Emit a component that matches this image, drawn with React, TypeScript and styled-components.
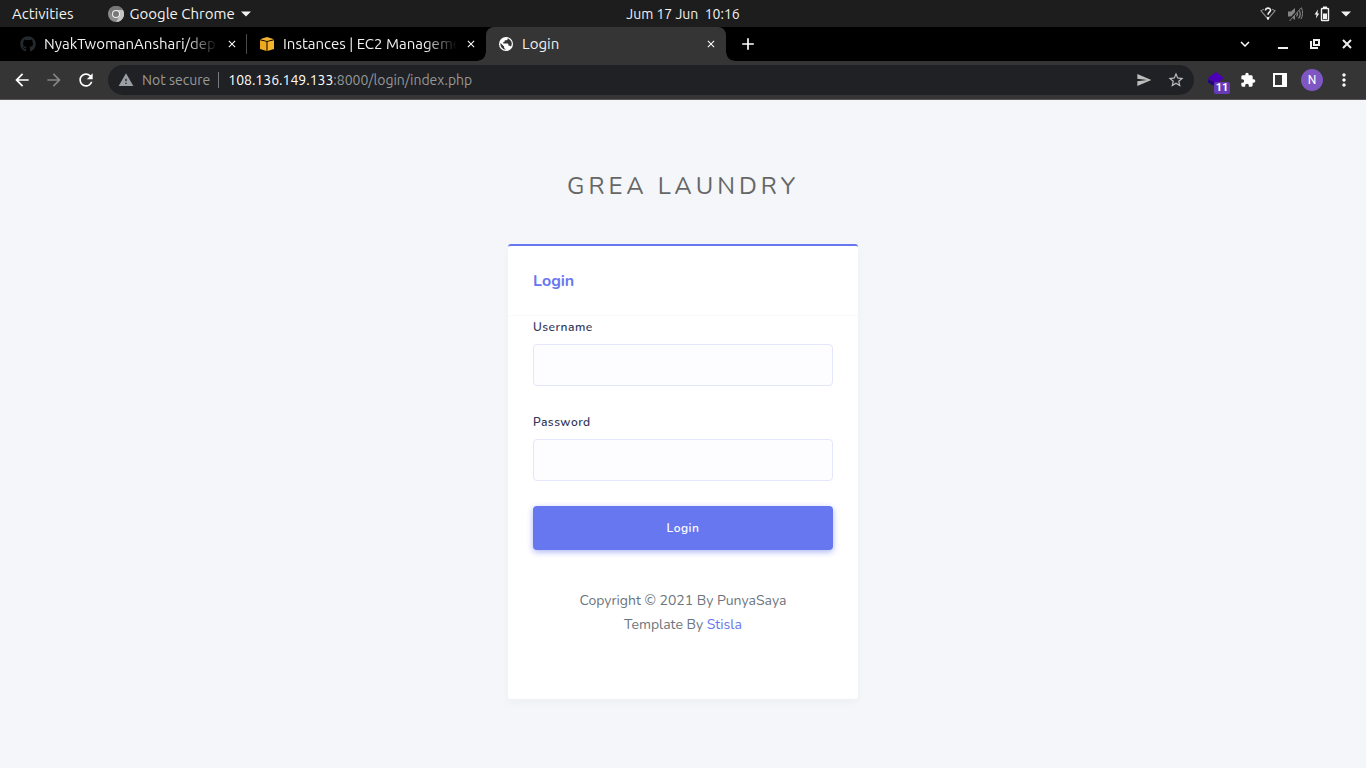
import React from "react";
import styled, { createGlobalStyle, css } from "styled-components";
import {
  MdAdd,
  MdArrowBack,
  MdArrowForward,
  MdClose,
  MdExtension,
  MdKeyboardArrowDown,
  MdMoreVert,
  MdRefresh,
  MdSend,
  MdStarBorder,
  MdWarning,
} from "react-icons/md";
import { FaGithub } from "react-icons/fa";

const GlobalStyle = createGlobalStyle`
  *, *::before, *::after { box-sizing: border-box; }
  body { margin: 0; background: #f4f6f9; }
  button, input { font: inherit; }
`;

const uiFont = `Ubuntu, "Noto Sans", "Open Sans", sans-serif`;
const pageFont = `Nunito, "Open Sans", "Noto Sans", sans-serif`;

const Screen = styled.div`
  display: flex;
  flex-direction: column;
  min-height: 100vh;
  font-family: ${uiFont};
  font-size: 14px;
  line-height: 20px;
`;

const SystemBar = styled.header`
  display: grid;
  grid-template-columns: 1fr auto 1fr;
  align-items: center;
  height: 27px;
  padding: 0 12px;
  background: #1d1d1d;
  color: #f2f2f2;
`;

const SystemGroup = styled.div<{ $end?: boolean }>`
  display: flex;
  align-items: center;
  gap: ${(p) => (p.$end ? "11px" : "34px")};
  padding-right: ${(p) => (p.$end ? "3px" : "0")};
  justify-content: ${(p) => (p.$end ? "flex-end" : "flex-start")};
`;

const plainButton = css`
  display: inline-flex;
  align-items: center;
  justify-content: center;
  padding: 0;
  border: 0;
  background: none;
  color: inherit;
`;

const SystemButton = styled.button`
  ${plainButton}
  gap: 6px;
  font-size: 15px;
  white-space: nowrap;
`;

const Clock = styled.time`
  white-space: pre;
`;

const TabStrip = styled.div`
  display: flex;
  height: 34px;
  padding-left: 8px;
  background: #000;
  color: #f1f1f1;
`;

const Tab = styled.div<{ $active?: boolean; $divided?: boolean }>`
  position: relative;
  display: flex;
  align-items: center;
  flex: 0 1 ${(p) => (p.$active ? "240px" : "239px")};
  min-width: 0;
  gap: 8px;
  padding: 0 9px 0 12px;
  ${(p) =>
    p.$active &&
    css`
      background: #353535;
      border-radius: 8px 8px 0 0;
      &::before,
      &::after {
        content: "";
        position: absolute;
        bottom: 0;
        width: 8px;
        height: 8px;
      }
      &::before {
        right: 100%;
        background: radial-gradient(circle at 0 0, transparent 7px, #353535 8px);
      }
      &::after {
        left: 100%;
        background: radial-gradient(circle at 100% 0, transparent 7px, #353535 8px);
      }
    `}
  ${(p) =>
    p.$divided &&
    css`
      &::after {
        content: "";
        position: absolute;
        right: 0;
        top: 7px;
        width: 1px;
        height: 20px;
        background: #4a4a4a;
      }
    `}
`;

const TabTitle = styled.span<{ $faded?: boolean }>`
  flex: 1;
  min-width: 0;
  font-size: 15px;
  white-space: nowrap;
  ${(p) =>
    p.$faded &&
    css`
      mask-image: linear-gradient(to right, #000 calc(100% - 32px), transparent);
    `}
`;

const IconButton = styled.button<{ $size: number; $dim?: boolean }>`
  ${plainButton}
  flex: none;
  width: ${(p) => p.$size}px;
  height: ${(p) => p.$size}px;
  color: ${(p) => (p.$dim ? "#858585" : "#fff")};
`;

const NewTab = styled(IconButton)`
  align-self: center;
  margin-left: 8px;
`;

const WindowControls = styled.div`
  display: flex;
  align-items: center;
  margin-left: auto;
  padding-right: 3px;
`;

const WindowGap = styled.span`
  width: 6px;
`;

const Toolbar = styled.div`
  display: flex;
  align-items: center;
  height: 39px;
  padding: 0 6px;
  background: #353535;
  border-bottom: 1px solid #5b5759;
`;

const AddressBar = styled.form`
  display: flex;
  align-items: center;
  flex: 1;
  min-width: 0;
  height: 30px;
  margin: 0 6px;
  padding: 0 2px 0 10px;
  border-radius: 15px;
  background: #202124;
  color: #9aa0a6;
`;

const Security = styled.button`
  ${plainButton}
  gap: 8px;
  padding-right: 8px;
  color: #9a9a9a;
  white-space: nowrap;
`;

const Address = styled.div`
  flex: 1;
  min-width: 0;
  padding-left: 9px;
  border-left: 1px solid #77797c;
  line-height: 16px;
  color: #969798;
  white-space: nowrap;
  overflow: hidden;
`;

const Host = styled.span`
  color: #fff;
`;

const Extension = styled(IconButton)`
  position: relative;
`;

const Badge = styled.span`
  position: absolute;
  left: 14px;
  top: 18px;
  width: 16px;
  border-radius: 2px;
  background: #673ab7;
  color: #fff;
  font: bold 11px/12px Roboto, sans-serif;
  text-align: center;
`;

const Avatar = styled.span`
  width: 22px;
  height: 22px;
  border-radius: 50%;
  background: #7e57c2;
  color: #fff;
  font: 12px/22px Roboto, sans-serif;
  text-align: center;
`;

const Page = styled.main`
  flex: 1;
  display: flex;
  flex-direction: column;
  align-items: center;
  padding: 68px 16px;
  background: #f4f6f9;
  font-family: ${pageFont};
  color: #6c757d;
`;

const Brand = styled.h1`
  margin: 0 0 40px;
  font-size: 24px;
  font-weight: 400;
  line-height: 36px;
  letter-spacing: 4px;
  text-transform: uppercase;
  color: #666;
`;

const Card = styled.section`
  width: 100%;
  max-width: 350px;
  border-top: 2px solid #6777ef;
  border-radius: 3px;
  background: #fff;
  box-shadow: 0 4px 8px rgba(0, 0, 0, 0.03);
`;

const CardHeader = styled.div`
  padding: 21px 25px 20px;
  border-bottom: 1px solid #f9f9f9;
`;

const CardTitle = styled.h2`
  margin: 0;
  font-size: 16px;
  font-weight: 700;
  line-height: 28px;
  color: #6777ef;
`;

const LoginForm = styled.form`
  display: flex;
  flex-direction: column;
  gap: 25px;
  padding: 0 25px;
`;

const Field = styled.div`
  display: flex;
  flex-direction: column;
  gap: 8px;
  padding-top: 2px;
`;

const Label = styled.label`
  font-size: 12px;
  font-weight: 600;
  line-height: 18px;
  letter-spacing: 0.5px;
  color: #34395e;
`;

const Input = styled.input`
  width: 100%;
  height: 42px;
  padding: 10px 15px;
  border: 1px solid #e4e6fc;
  border-radius: 4px;
  background: #fdfdff;
  outline: none;
`;

const Submit = styled.button`
  height: 44px;
  border: 0;
  border-radius: 4px;
  background: #6777ef;
  box-shadow: 0 2px 6px #acb5f6;
  color: #fff;
  font-size: 12px;
  font-weight: 600;
  letter-spacing: 0.5px;
`;

const Credits = styled.footer`
  padding: 39px 25px 62px;
  text-align: center;
  font-size: 14px;
  line-height: 24px;

  p {
    margin: 0;
  }
  a {
    color: #6777ef;
    text-decoration: none;
  }
`;

const ChromeMark = () => (
  <svg width="16" height="16" viewBox="0 0 16 16" aria-hidden="true">
    <circle cx="8" cy="8" r="8" fill="#8b8b8b" />
    <path d="M8 4h7a8 8 0 0 1-7 12l3.500-6z" fill="#c4c4c4" />
    <path d="M1 4a8 8 0 0 1 14 0H8L4.500 10z" fill="#777" />
    <circle cx="8" cy="8" r="4" fill="#f1f1f1" />
    <circle cx="8" cy="8" r="3" fill="#777" />
  </svg>
);

const Caret = () => (
  <svg width="10" height="6" viewBox="0 0 10 6" aria-hidden="true">
    <path d="M0 .5h10L5 5.500z" fill="#f2f2f2" />
  </svg>
);

const WifiUnknown = () => (
  <svg width="16" height="16" viewBox="0 0 16 16" fill="none" aria-hidden="true">
    <path d="M4 3.200Q2.500 3.700 1 4.800L8 13l7-8.200Q13.500 3.700 12 3.200" stroke="#8a8a8a" strokeWidth="1.200" />
    <path d="M5.500 4.500C5.500 1.200 10.800 1.400 10.500 4.500 10.300 6.300 8 6.200 8 8.800" stroke="#f2f2f2" strokeWidth="1.600" />
    <rect x="7" y="11" width="2" height="2.500" fill="#f2f2f2" />
  </svg>
);

const VolumeMuted = () => (
  <svg width="16" height="16" viewBox="0 0 16 16" fill="none" stroke="#858585" aria-hidden="true">
    <path d="M1 5.500h3L8 2v12l-4-3.500H1z" fill="#858585" stroke="none" />
    <path d="M9.500 5.500q2 2.500 0 5M11.500 3.500q3.500 4.500 0 9" strokeWidth="1.200" />
    <path d="M14.500 2C16 5 16 10 14 13" strokeWidth="1" />
    <path d="M1.500 15L14 1" stroke="#1d1d1d" strokeWidth="2" />
    <path d="M2.500 15L14.500 1.500" strokeWidth="1" />
  </svg>
);

const BatteryCharging = () => (
  <svg width="16" height="16" viewBox="0 0 16 16" aria-hidden="true">
    <path d="M4 3.500L.5 8.500h2L2 12.500l3.200-5H3.400z" fill="#f2f2f2" />
    <path d="M9 .5h4v2H9z" fill="#f2f2f2" />
    <rect x="7.500" y="2.500" width="7" height="12" rx=".5" fill="none" stroke="#f2f2f2" strokeWidth="1.400" />
    <path d="M9 7.500h4V13H9z" fill="#f2f2f2" />
  </svg>
);

const Globe = () => (
  <svg width="16" height="16" viewBox="0 0 16 16" aria-hidden="true">
    <circle cx="8" cy="8" r="7" fill="#fff" />
    <path
      d="M9.500 2.300c.4 1-.2 1.900-1.300 2H6.800v1.300L5.300 6v1.500h4.200c1 0 1 1.200 1 2.200h1.200c.6 0 1 .4 1.200.9A5.600 5.600 0 0 0 9.500 2.300zM2.500 7l3.600 3.600v.8c0 .8.600 1.300 1.300 1.300v1A5.700 5.700 0 0 1 2.500 7z"
      fill="#353535"
    />
  </svg>
);

const AwsCube = () => (
  <svg width="16" height="16" viewBox="0 0 16 16" aria-hidden="true">
    <path d="M1 3.200L8 1l7 2.200L8 5z" fill="#f5b335" />
    <path d="M1 4.300l6.500 1.400V15L1 13z" fill="#f0a91f" />
    <path d="M15 4.300L8.500 5.700V15l6.500-2z" fill="#f6b42c" />
  </svg>
);

const MinimizeIcon = () => (
  <svg width="10" height="10" viewBox="0 0 10 10" aria-hidden="true">
    <path d="M0 8h10v2H0z" fill="#eee" />
  </svg>
);

const RestoreIcon = () => (
  <svg width="10" height="10" viewBox="0 0 10 10" fill="none" stroke="#eee" strokeWidth="2" aria-hidden="true">
    <path d="M4 1h5v5H4z" />
    <path d="M1 2v7h7" />
  </svg>
);

const WindowClose = () => (
  <svg width="10" height="10" viewBox="0 0 10 10" fill="none" stroke="#eee" strokeWidth="2" aria-hidden="true">
    <path d="M1 1l8 8M9 1L1 9" />
  </svg>
);

const ExtensionMark = () => (
  <svg width="16" height="16" viewBox="0 0 16 16" aria-hidden="true">
    <path d="M0 7l8 4.500V15L0 10.500z" fill="#240580" />
    <path d="M8 0l8 6-8 6-8-6z" fill="#4b00b5" />
  </svg>
);

const SidePanel = () => (
  <svg width="14" height="14" viewBox="0 0 14 14" aria-hidden="true">
    <path d="M1 1h12v12H1z" fill="none" stroke="#fff" strokeWidth="2" />
    <path d="M9 1h4v12H9z" fill="#fff" />
  </svg>
);

interface BrowserTabProps {
  title: string;
  icon: React.ReactNode;
  active?: boolean;
  divided?: boolean;
}

const BrowserTab = ({ title, icon, active, divided }: BrowserTabProps) => (
  <Tab $active={active} $divided={divided} role="tab" aria-selected={!!active}>
    {icon}
    <TabTitle $faded={!active}>{title}</TabTitle>
    <IconButton $size={12} aria-label={`Close ${title}`}>
      <MdClose size={14} stroke="currentColor" />
    </IconButton>
  </Tab>
);

export default function App() {
  return (
    <Screen>
      <GlobalStyle />
      <SystemBar>
        <SystemGroup>
          <SystemButton>Activities</SystemButton>
          <SystemButton>
            <ChromeMark />
            Google Chrome
            <Caret />
          </SystemButton>
        </SystemGroup>
        <Clock>{"Jum 17 Jun  10:16"}</Clock>
        <SystemGroup $end>
          <WifiUnknown />
          <VolumeMuted />
          <BatteryCharging />
          <Caret />
        </SystemGroup>
      </SystemBar>

      <TabStrip role="tablist">
        <BrowserTab
          title="NyakTwomanAnshari/dep"
          icon={<FaGithub size={16} color="#24292e" />}
          divided
        />
        <BrowserTab title="Instances | EC2 Manageme" icon={<AwsCube />} />
        <BrowserTab title="Login" icon={<Globe />} active />
        <NewTab $size={28} aria-label="New tab">
          <MdAdd size={20} />
        </NewTab>
        <WindowControls>
          <IconButton $size={32} aria-label="Search tabs">
            <MdKeyboardArrowDown size={18} />
          </IconButton>
          <WindowGap />
          <IconButton $size={32} aria-label="Minimize">
            <MinimizeIcon />
          </IconButton>
          <IconButton $size={32} aria-label="Restore">
            <RestoreIcon />
          </IconButton>
          <IconButton $size={32} aria-label="Close window">
            <WindowClose />
          </IconButton>
        </WindowControls>
      </TabStrip>

      <Toolbar>
        <IconButton $size={32} aria-label="Back">
          <MdArrowBack size={20} />
        </IconButton>
        <IconButton $size={32} $dim aria-label="Forward">
          <MdArrowForward size={20} />
        </IconButton>
        <IconButton $size={32} aria-label="Reload">
          <MdRefresh size={20} />
        </IconButton>
        <AddressBar>
          <Security type="button">
            <MdWarning size={16} color="#9aa0a6" />
            Not secure
          </Security>
          <Address>
            <Host>108.136.149.133</Host>:8000/login/index.php
          </Address>
          <IconButton type="button" $size={32} aria-label="Share">
            <MdSend size={16} color="#bdbdbd" />
          </IconButton>
          <IconButton type="button" $size={32} aria-label="Bookmark">
            <MdStarBorder size={18} color="#bdbdbd" />
          </IconButton>
        </AddressBar>
        <Extension $size={32} aria-label="Extension, 11 items">
          <ExtensionMark />
          <Badge>11</Badge>
        </Extension>
        <IconButton $size={32} aria-label="Extensions">
          <MdExtension size={16} />
        </IconButton>
        <IconButton $size={32} aria-label="Side panel">
          <SidePanel />
        </IconButton>
        <IconButton $size={32} aria-label="Profile">
          <Avatar>N</Avatar>
        </IconButton>
        <IconButton $size={32} aria-label="Menu">
          <MdMoreVert size={20} />
        </IconButton>
      </Toolbar>

      <Page>
        <Brand>Grea Laundry</Brand>
        <Card>
          <CardHeader>
            <CardTitle>Login</CardTitle>
          </CardHeader>
          <LoginForm>
            <Field>
              <Label htmlFor="username">Username</Label>
              <Input id="username" name="username" type="text" />
            </Field>
            <Field>
              <Label htmlFor="password">Password</Label>
              <Input id="password" name="password" type="password" />
            </Field>
            <Submit type="submit">Login</Submit>
          </LoginForm>
          <Credits>
            <p>Copyright © 2021 By PunyaSaya</p>
            <p>
              Template By <a href="#stisla">Stisla</a>
            </p>
          </Credits>
        </Card>
      </Page>
    </Screen>
  );
}
